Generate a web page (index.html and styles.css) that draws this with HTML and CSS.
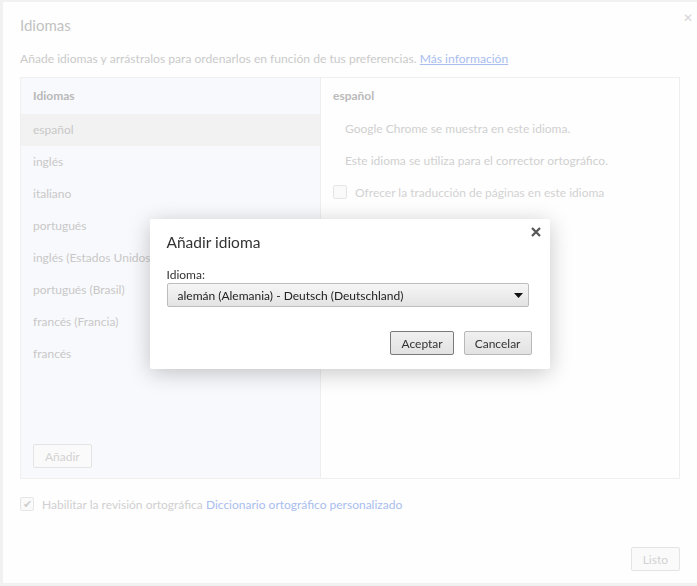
FILE: index.html
```html
<!DOCTYPE html>
<html lang="es">
<head>
  <meta charset="UTF-8">
  <title>Idiomas</title>
  <link rel="stylesheet" href="styles.css">
</head>
<body>

  <!-- Languages settings overlay (faded behind the dialog) -->
  <div class="settings">
    <div class="settings-head">
      <h1>Idiomas</h1>
      <span class="close-faded">&#x2715;</span>
    </div>
    <p class="intro">Añade idiomas y arrástralos para ordenarlos en función de tus preferencias. <a href="#">Más información</a></p>

    <div class="lang-box">
      <div class="lang-list">
        <div class="list-head">Idiomas</div>
        <div class="lang-row selected">español</div>
        <div class="lang-row">inglés</div>
        <div class="lang-row">italiano</div>
        <div class="lang-row">portugués</div>
        <div class="lang-row">inglés (Estados Unidos)</div>
        <div class="lang-row">portugués (Brasil)</div>
        <div class="lang-row">francés (Francia)</div>
        <div class="lang-row">francés</div>
        <button class="btn-faded add-btn">Añadir</button>
      </div>
      <div class="lang-detail">
        <div class="list-head">español</div>
        <div class="detail-line">Google Chrome se muestra en este idioma.</div>
        <div class="detail-line">Este idioma se utiliza para el corrector ortográfico.</div>
        <label class="check-line"><span class="check"></span>Ofrecer la traducción de páginas en este idioma</label>
      </div>
    </div>

    <label class="spell-line"><span class="check checked">&#x2714;</span>Habilitar la revisión ortográfica&nbsp;<a href="#">Diccionario ortográfico personalizado</a></label>

    <div class="settings-foot">
      <button class="btn-faded">Listo</button>
    </div>
  </div>

  <!-- Add language dialog -->
  <div class="backdrop">
    <div class="dialog">
      <div class="dialog-head">
        <h2>Añadir idioma</h2>
        <svg class="close" width="10" height="10" viewBox="0 0 10 10">
          <path d="M1 1 L9 9 M9 1 L1 9" stroke="#555" stroke-width="2.2"/>
        </svg>
      </div>
      <div class="field-label">Idioma:</div>
      <div class="select">
        <span>alemán (Alemania) - Deutsch (Deutschland)</span>
        <svg width="9" height="5" viewBox="0 0 9 5"><path d="M0 0 H9 L4.5 5 Z" fill="#111"/></svg>
      </div>
      <div class="dialog-buttons">
        <button class="btn focused">Aceptar</button>
        <button class="btn">Cancelar</button>
      </div>
    </div>
  </div>

</body>
</html>
```

FILE: styles.css
```css
body {
  margin: 0;
  height: 586px;
  overflow: hidden;
  background: #f1f1f1;
  font-family: Lato, "Open Sans", sans-serif;
  font-size: 12px;
}

a {
  color: #a9bdee;
}

.settings {
  margin: 2px 0 0 3px;
  height: 581px;
  background: #fefefe;
  padding: 0 17px;
  display: flex;
  flex-direction: column;
}

.settings-head {
  display: flex;
  justify-content: space-between;
  align-items: flex-start;
  padding-top: 13px;
  height: 33px;
}

.settings-head h1 {
  margin: 0;
  font-size: 15px;
  font-weight: normal;
  color: #c2c2c2;
  line-height: 20px;
}

.close-faded {
  color: #d6d6d6;
  font-size: 12px;
  margin: -5px -13px 0 0;
}

.intro {
  margin: 3px 0 0 0;
  line-height: 16px;
  color: #cacaca;
  font-size: 12.1px;
}

.lang-box {
  margin-top: 10px;
  height: 400px;
  border: 1px solid #efefef;
  display: grid;
  grid-template-columns: 300px 1fr;
}

.lang-list {
  background: #f8f9fc;
  border-right: 1px solid #efefef;
  display: flex;
  flex-direction: column;
}

.list-head {
  height: 36px;
  line-height: 36px;
  padding-left: 12px;
  font-weight: bold;
  color: #b8b8b8;
}

.lang-row {
  height: 32px;
  line-height: 32px;
  padding-left: 12px;
  color: #c8c8c8;
}

.lang-row.selected {
  background: #f2f2f2;
}

.add-btn {
  margin: auto 0 10px 12px;
  align-self: flex-start;
}

.btn-faded {
  height: 24px;
  padding: 0 11px;
  font-family: inherit;
  font-size: 12px;
  color: #d2d2d2;
  background: #fafafa;
  border: 1px solid #e4e4e4;
  border-radius: 2px;
}

.lang-detail .list-head {
  color: #bababa;
}

.detail-line {
  height: 32px;
  line-height: 30px;
  padding-left: 24px;
  color: #d0d0d0;
}

.check-line {
  display: flex;
  align-items: center;
  height: 28px;
  padding-left: 12px;
  color: #d2d2d2;
}

.check {
  width: 12px;
  height: 12px;
  border: 1px solid #e6e6e6;
  border-radius: 2px;
  background: #fafafa;
  margin-right: 8px;
  display: inline-flex;
  align-items: center;
  justify-content: center;
  font-size: 11px;
  color: #cfcfcf;
}

.spell-line {
  display: flex;
  align-items: center;
  margin-top: 17px;
  height: 16px;
  color: #d0d0d0;
}

.spell-line a {
  text-decoration: none;
}

.spell-line .check {
  margin-right: 8px;
}

.settings-foot {
  margin-top: auto;
  margin-bottom: 12px;
  display: flex;
  justify-content: flex-end;
}

/* dialog */
.backdrop {
  position: fixed;
  inset: 0;
  display: flex;
  align-items: center;
  justify-content: center;
}

.dialog {
  width: 400px;
  height: 150px;
  box-sizing: border-box;
  background: #fff;
  border-radius: 2px;
  box-shadow: 0 4px 22px rgba(0, 0, 0, 0.22);
  padding: 11px 21px 0 17px;
  margin: 2px 0 0 2px;
  color: #333;
}

.dialog-head {
  display: flex;
  justify-content: space-between;
  align-items: flex-start;
}

.dialog-head h2 {
  margin: 0;
  font-size: 15.5px;
  font-weight: normal;
  line-height: 24px;
  color: #333;
}

.close {
  margin: -3px -12px 0 0;
}

.field-label {
  margin-top: 13px;
  line-height: 16px;
}

.select {
  height: 24px;
  box-sizing: border-box;
  border: 1px solid #bdbdbd;
  border-radius: 2px;
  background: linear-gradient(#f6f6f6, #e3e3e3);
  display: flex;
  align-items: center;
  justify-content: space-between;
  padding: 0 5px 0 10px;
  color: #222;
}

.dialog-buttons {
  margin: 24px -3px 0 0;
  display: flex;
  justify-content: flex-end;
  gap: 10px;
}

.btn {
  height: 24px;
  padding: 0 10px;
  font-family: inherit;
  font-size: 12px;
  color: #333;
  background: linear-gradient(#f0f0f0, #e2e2e2);
  border: 1px solid #b8b8b8;
  border-radius: 2px;
}

.btn.focused {
  border-color: #7a7a7a;
}
```
